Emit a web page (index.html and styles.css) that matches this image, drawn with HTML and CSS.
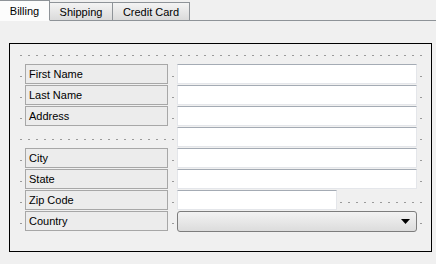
FILE: index.html
```html
<!DOCTYPE html>
<html lang="en">
<head>
  <meta charset="UTF-8" />
  <title>Address Form</title>
  <link rel="stylesheet" href="styles.css">
</head>
<body>
  <!-- Tab strip -->
  <div class="tabs">
    <div class="tab active">Billing</div>
    <div class="tab">Shipping</div>
    <div class="tab wide">Credit Card</div>
  </div>

  <!-- Billing page -->
  <div class="page">
    <div class="frame">
      <div class="grid">
        <div class="label">First Name</div>
        <div class="field"></div>
        <div class="label">Last Name</div>
        <div class="field"></div>
        <div class="label">Address</div>
        <div class="field"></div>
        <div></div>
        <div class="field"></div>
        <div class="label">City</div>
        <div class="field"></div>
        <div class="label">State</div>
        <div class="field"></div>
        <div class="label">Zip Code</div>
        <div class="field short"></div>
        <div class="label">Country</div>
        <div class="combo">
          <svg width="9" height="5" viewBox="0 0 9 5"><path d="M0 0h9L4.5 5z" fill="#000"/></svg>
        </div>
      </div>
    </div>
  </div>
</body>
</html>
```

FILE: styles.css
```css
/* Reset */
* {
  margin: 0;
  padding: 0;
  box-sizing: border-box;
}
body {
  font-family: 'Liberation Sans', Arial, sans-serif;
  font-size: 11px;
  color: #000;
  background: #f0f0f0;
  width: 436px;
  height: 264px;
  overflow: hidden;
}

/* Tab strip */
.tabs {
  display: flex;
  align-items: flex-end;
  height: 21px;
  border-bottom: 1px solid #8e9398;
}
.tab {
  width: 63px;
  height: 19px;
  margin-bottom: -1px;
  border: 1px solid #8e9398;
  border-left: none;
  background: linear-gradient(#f4f4f4, #dadada);
  text-align: center;
  line-height: 18px;
}
.tab.wide {
  width: 77px;
}
.tab.active {
  width: 50px;
  height: 21px;
  border-left: none;
  border-bottom: 1px solid #fcfcfc;
  background: #fcfcfc;
  line-height: 20px;
}

/* Page with black frame */
.page {
  padding: 22px 0 0 9px;
}
.frame {
  width: 423px;
  height: 209px;
  border: 1px solid #000;
  padding: 11px 0 0 7px;
}
.grid {
  width: 409px;
  height: 186px;
  padding: 9px 0 0 8px;
  display: grid;
  grid-template-columns: 143px 240px;
  grid-auto-rows: 20px;
  column-gap: 9px;
  row-gap: 1px;
  background-image:
    radial-gradient(circle, #9a9a9a 0.5px, transparent 0.8px);
  background-size: 8px 21px;
  background-position: 0 -10px;
}

/* Labels and inputs */
.label {
  border: 1px solid #a7a7a7;
  background: #ececec;
  padding-left: 3px;
  line-height: 18px;
}
.field {
  background: #fff;
  border: 1px solid #e4e6ea;
  border-top-color: #a4abb4;
}
.field.short {
  width: 160px;
}
.combo {
  border: 1px solid #7d7d7d;
  border-radius: 3px;
  background: linear-gradient(#f3f3f3, #dcdcdc);
  display: flex;
  justify-content: flex-end;
  align-items: center;
  padding-right: 6px;
  height: 21px;
}
```
